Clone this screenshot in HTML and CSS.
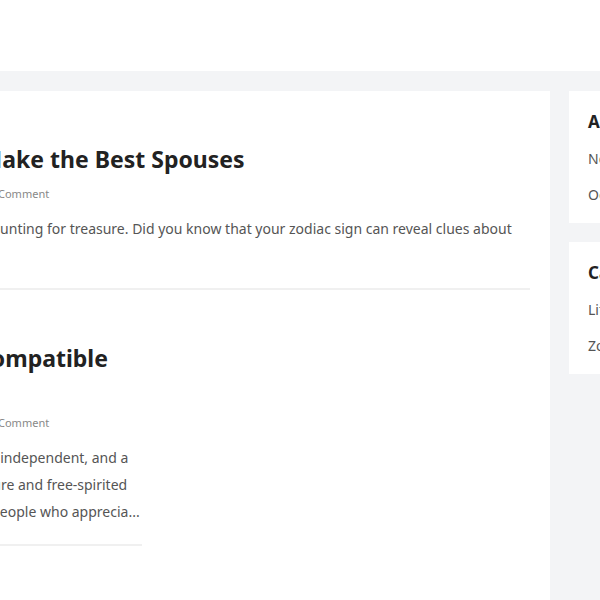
FILE: index.html
```html
<!DOCTYPE html>
<html lang="en">
<head>
<meta charset="utf-8">
<title>Zodiac Blog</title>
<link rel="stylesheet" href="styles.css">
</head>
<body>
<header class="site-header"></header>
<div class="site-body">
  <div class="container">
    <main class="content-card">
      <article class="post">
        <h2 class="post-title">Zodiac: Which Signs Make the Best Spouses</h2>
        <div class="post-meta">By admin / Zodiac, Love / October 12, 2023 / No Comment</div>
        <p class="post-excerpt">Finding the best spouse can feel like hunting for treasure. Did you know that your zodiac sign can reveal clues about your future spouse?</p>
      </article>
      <article class="post post--thumb">
        <div class="post-body">
          <h2 class="post-title">Sagittarians – Most Compatible Signs</h2>
          <div class="post-meta">By admin / Zodiac, Love / October 10, 2023 / No Comment</div>
          <p class="post-excerpt">Sagittarians are adventurous, honest, independent, and a bit of a wanderer. Their energetic nature and free-spirited outlook make them compatible with people who apprecia...</p>
        </div>
        <div class="post-thumb"></div>
      </article>
    </main>
    <aside class="sidebar">
      <section class="widget">
        <h3 class="widget-title">Archives</h3>
        <ul class="widget-list">
          <li>November 2023</li>
          <li>October 2023</li>
        </ul>
      </section>
      <section class="widget">
        <h3 class="widget-title">Categories</h3>
        <ul class="widget-list">
          <li>Life</li>
          <li>Zodiac</li>
        </ul>
      </section>
    </aside>
  </div>
</div>
</body>
</html>
```
FILE: styles.css
```css
* { box-sizing: border-box; }
html, body { margin: 0; padding: 0; }
body {
  font-family: "Noto Sans", "Open Sans", sans-serif;
  background: #f3f4f6;
  color: #555;
  overflow: hidden;
}
.site-header {
  height: 71px;
  background: #fff;
}
.site-body {
  display: flex;
  justify-content: center;
  padding-top: 20px;
  min-height: 529px;
}
.container {
  flex: 0 0 1140px;
  width: 1140px;
  display: flex;
  gap: 19px;
  align-items: flex-start;
}
.content-card {
  flex: 1;
  background: #fff;
  padding: 0 20px 60px;
  min-height: 600px;
}
.post {
  padding: 53px 0 19px;
  border-bottom: 2px solid #f0f0f0;
}
.post--thumb {
  display: flex;
  gap: 30px;
  border-bottom: none;
  padding-bottom: 0;
}
.post--thumb .post-body {
  width: 392px;
  flex: 0 0 392px;
  padding-bottom: 19px;
  border-bottom: 2px solid #f0f0f0;
}
.post--thumb .post-excerpt {
  margin-top: 2px;
}
.post-thumb {
  flex: 1;
}
.post-title {
  margin: 0 0 11px;
  font-size: 23px;
  line-height: 30px;
  font-weight: 700;
  color: #222;
}
.post-meta {
  font-size: 11px;
  line-height: 18px;
  color: #888;
  margin-bottom: 12px;
}
.post-excerpt {
  margin: 0;
  font-size: 14px;
  line-height: 27px;
  color: #555;
}
.sidebar {
  flex: 0 0 301px;
  display: flex;
  flex-direction: column;
  gap: 19px;
}
.widget {
  background: #fff;
  padding: 20px 19px 16px;
}
.widget-title {
  margin: 0 0 14px;
  font-size: 17px;
  line-height: 22px;
  font-weight: 700;
  color: #222;
}
.widget-list {
  list-style: none;
  margin: 0;
  padding: 0;
  display: flex;
  flex-direction: column;
  gap: 12px;
}
.widget-list li {
  font-size: 14px;
  line-height: 24px;
  color: #555;
}
```
